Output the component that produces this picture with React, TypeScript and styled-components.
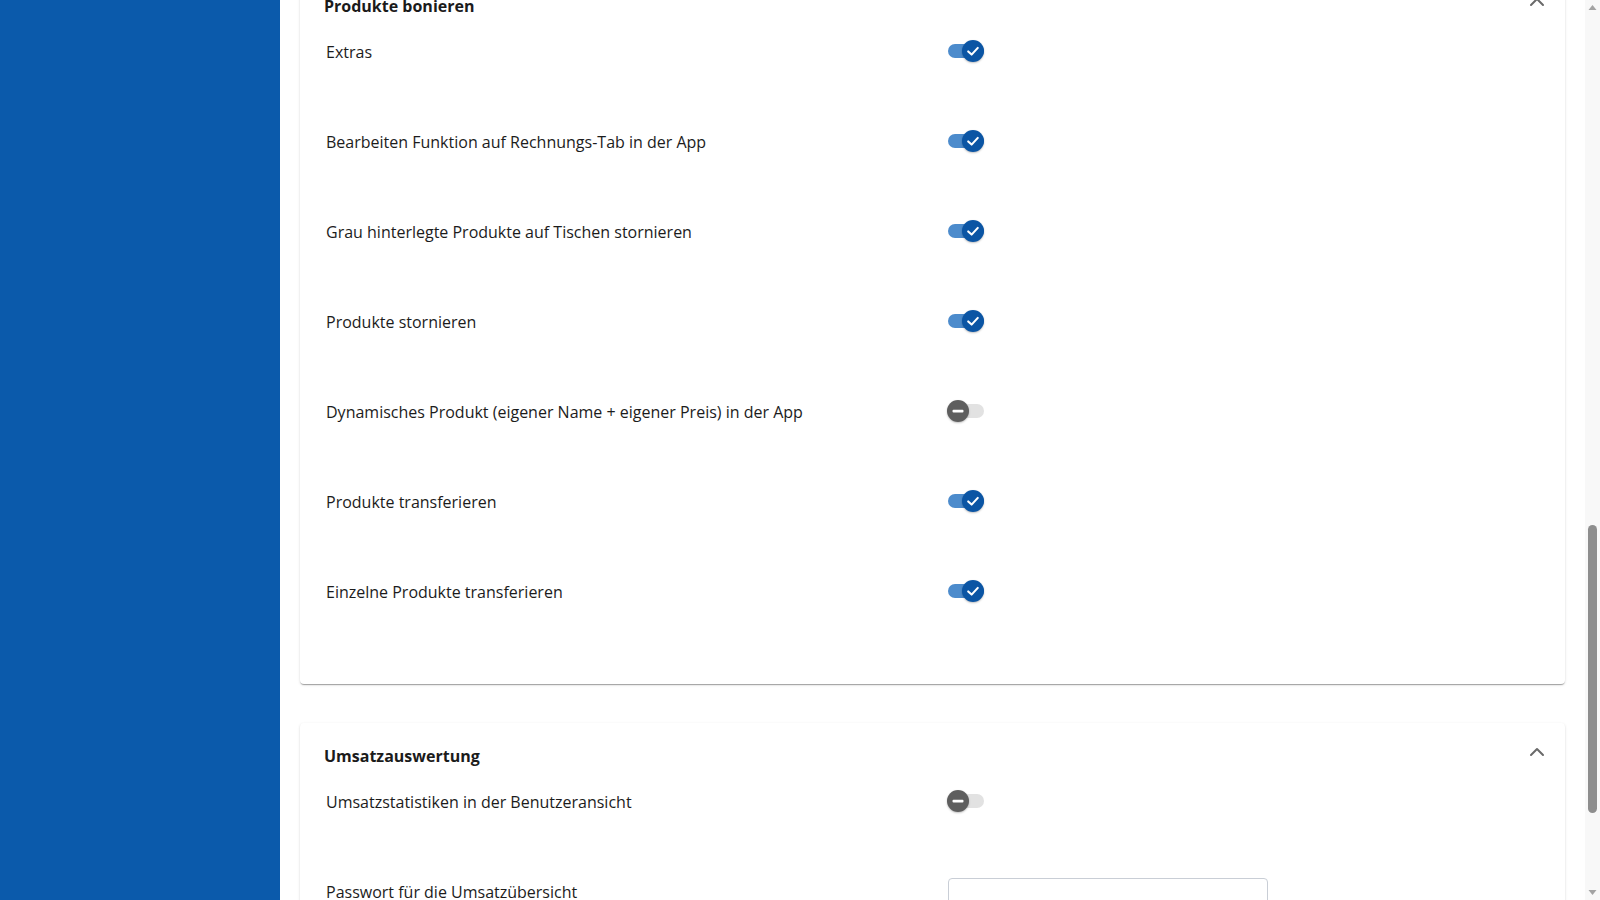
import React, { useLayoutEffect, useRef, useState } from 'react';
import styled, { createGlobalStyle } from 'styled-components';
import { ChevronUp } from 'lucide-react';

type Setting = {
  label: string;
  kind: 'toggle' | 'password';
  on?: boolean;
};

type Section = {
  id: string;
  title: string;
  settings: Setting[];
};

const SECTIONS: Section[] = [
  {
    id: 'allgemein',
    title: 'Allgemein',
    settings: [
      { label: 'Trinkgeld erlauben', kind: 'toggle', on: true },
      { label: 'Bon automatisch drucken', kind: 'toggle', on: true },
      { label: 'Kassenlade automatisch öffnen', kind: 'toggle', on: false },
      { label: 'Bewirtungsbeleg anbieten', kind: 'toggle', on: true },
      { label: 'Gutscheine akzeptieren', kind: 'toggle', on: false },
      { label: 'Rabatte erlauben', kind: 'toggle', on: true },
    ],
  },
  {
    id: 'tische',
    title: 'Tische',
    settings: [
      { label: 'Tischplan anzeigen', kind: 'toggle', on: true },
      { label: 'Tische zusammenlegen', kind: 'toggle', on: true },
      { label: 'Tische teilen', kind: 'toggle', on: false },
      { label: 'Gästeanzahl abfragen', kind: 'toggle', on: false },
      { label: 'Offene Tische hervorheben', kind: 'toggle', on: true },
    ],
  },
  {
    id: 'zahlung',
    title: 'Zahlung',
    settings: [
      { label: 'Kartenzahlung', kind: 'toggle', on: true },
      { label: 'Rechnung splitten', kind: 'toggle', on: true },
    ],
  },
  {
    id: 'bonieren',
    title: 'Produkte bonieren',
    settings: [
      { label: 'Extras', kind: 'toggle', on: true },
      { label: 'Bearbeiten Funktion auf Rechnungs-Tab in der App', kind: 'toggle', on: true },
      { label: 'Grau hinterlegte Produkte auf Tischen stornieren', kind: 'toggle', on: true },
      { label: 'Produkte stornieren', kind: 'toggle', on: true },
      { label: 'Dynamisches Produkt (eigener Name + eigener Preis) in der App', kind: 'toggle', on: false },
      { label: 'Produkte transferieren', kind: 'toggle', on: true },
      { label: 'Einzelne Produkte transferieren', kind: 'toggle', on: true },
    ],
  },
  {
    id: 'umsatz',
    title: 'Umsatzauswertung',
    settings: [
      { label: 'Umsatzstatistiken in der Benutzeransicht', kind: 'toggle', on: false },
      { label: 'Passwort für die Umsatzübersicht', kind: 'password' },
    ],
  },
];

const ARROW_SIZE = 15;

const GlobalStyle = createGlobalStyle`
  html, body {
    margin: 0;
    padding: 0;
    height: 100%;
    overflow: hidden;
  }
  body {
    font-family: "Open Sans", "Noto Sans", "Liberation Sans", sans-serif;
    color: #1c1c1c;
    background: #ffffff;
  }
  * {
    box-sizing: border-box;
  }
`;

function Switch({ initial }: { initial: boolean }) {
  const [checked, setChecked] = useState(initial);
  return (
    <SwitchRoot
      type="button"
      role="switch"
      aria-checked={checked}
      onClick={() => setChecked(c => !c)}
    >
      <Track $checked={checked} />
      <Thumb $checked={checked}>
        {checked ? (
          <svg width="22" height="22" viewBox="0 0 22 22">
            <path
              d="M6.2 11.4 L9.6 14.6 L15.8 7.9"
              fill="none"
              stroke="#ffffff"
              strokeWidth="2.1"
              strokeLinecap="round"
              strokeLinejoin="round"
            />
          </svg>
        ) : (
          <svg width="22" height="22" viewBox="0 0 22 22">
            <rect x="5.5" y="9.8" width="11" height="2.6" rx="1" fill="#ffffff" />
          </svg>
        )}
      </Thumb>
    </SwitchRoot>
  );
}

function SettingsCard({ section, cardRef }: { section: Section; cardRef?: React.Ref<HTMLDivElement> }) {
  return (
    <Card ref={cardRef}>
      <CardHeader>
        <CardTitle>{section.title}</CardTitle>
        <CollapseButton type="button" aria-label="Einklappen">
          <ChevronUp size={24} strokeWidth={2} color="#6a6a6a" />
        </CollapseButton>
      </CardHeader>
      {section.settings.map(s => (
        <Row key={s.label}>
          <Label>{s.label}</Label>
          <Control>
            {s.kind === 'toggle' ? <Switch initial={!!s.on} /> : <PasswordInput type="password" />}
          </Control>
        </Row>
      ))}
    </Card>
  );
}

type ThumbBox = { top: number; height: number };

export default function App() {
  const mainRef = useRef<HTMLDivElement>(null);
  const anchorRef = useRef<HTMLDivElement>(null);
  const [thumb, setThumb] = useState<ThumbBox>({ top: ARROW_SIZE, height: 0 });

  const syncThumb = () => {
    const main = mainRef.current;
    if (!main) return;
    const rail = main.clientHeight - ARROW_SIZE * 2;
    setThumb({
      top: ARROW_SIZE + (main.scrollTop / main.scrollHeight) * rail,
      height: (main.clientHeight / main.scrollHeight) * rail,
    });
  };

  // open the page at the "Produkte bonieren" block
  useLayoutEffect(() => {
    const main = mainRef.current;
    const anchor = anchorRef.current;
    if (!main || !anchor) return;
    const offset = anchor.getBoundingClientRect().top - main.getBoundingClientRect().top + main.scrollTop;
    main.scrollTop = offset + 27;
    syncThumb();
  }, []);

  return (
    <>
      <GlobalStyle />
      <Layout>
        <Sidebar />
        <Main ref={mainRef} onScroll={syncThumb}>
          {SECTIONS.map(section => (
            <SettingsCard
              key={section.id}
              section={section}
              cardRef={section.id === 'bonieren' ? anchorRef : undefined}
            />
          ))}
        </Main>
        <ScrollRail>
          <RailArrow>
            <svg width="15" height="15" viewBox="0 0 15 15">
              <path d="M3.5 10 L7.5 5 L11.5 10 Z" fill="#a3a3a3" />
            </svg>
          </RailArrow>
          <RailThumb style={{ top: thumb.top, height: thumb.height }} />
          <RailArrow>
            <svg width="15" height="15" viewBox="0 0 15 15">
              <path d="M3.5 5 L7.5 10 L11.5 5 Z" fill="#a3a3a3" />
            </svg>
          </RailArrow>
        </ScrollRail>
      </Layout>
    </>
  );
}

const Layout = styled.div`
  display: grid;
  grid-template-columns: 280px 1fr 15px;
  height: 100vh;
  width: 100vw;
`;

const Sidebar = styled.aside`
  background: #0b5aab;
  height: 100%;
`;

const Main = styled.main`
  height: 100%;
  overflow-y: scroll;
  scrollbar-width: none;
  padding: 38px 20px 140px;
  display: flex;
  flex-direction: column;
  gap: 39px;
  background: #ffffff;

  &::-webkit-scrollbar {
    display: none;
  }
`;

const ScrollRail = styled.div`
  position: relative;
  height: 100%;
  background: #f8f8f8;
  display: flex;
  flex-direction: column;
  justify-content: space-between;
`;

const RailArrow = styled.div`
  width: 15px;
  height: 15px;
  display: flex;
`;

const RailThumb = styled.div`
  position: absolute;
  left: 3px;
  width: 9px;
  border-radius: 5px;
  background: #8e8e8e;
`;

const Card = styled.div`
  background: #ffffff;
  border-radius: 4px;
  padding: 21px 24px 14px;
  box-shadow: 0 2px 1px -1px rgba(0, 0, 0, 0.2), 0 1px 1px 0 rgba(0, 0, 0, 0.14),
    0 1px 3px 0 rgba(0, 0, 0, 0.12);
`;

const CardHeader = styled.div`
  display: flex;
  align-items: center;
  justify-content: space-between;
  height: 24px;
  margin-bottom: 22px;
`;

const CardTitle = styled.h3`
  margin: 0;
  font-size: 16px;
  line-height: 24px;
  font-weight: 700;
  color: #1b1b1b;
`;

const CollapseButton = styled.button`
  border: none;
  background: transparent;
  padding: 0;
  margin: -8px -8px 0 0;
  display: flex;
  cursor: pointer;
`;

const Row = styled.div`
  display: grid;
  grid-template-columns: minmax(0, 1fr) minmax(0, 1fr);
  column-gap: 30px;
  align-items: start;
  min-height: 90px;
`;

const Label = styled.div`
  font-size: 16px;
  line-height: 24px;
  padding-left: 2px;
  color: #1c1c1c;
`;

const Control = styled.div`
  display: flex;
  align-items: flex-start;
`;

const SwitchRoot = styled.button`
  position: relative;
  width: 38px;
  height: 24px;
  margin-top: -1px;
  padding: 0;
  border: none;
  background: transparent;
  cursor: pointer;
`;

const Track = styled.span<{ $checked: boolean }>`
  position: absolute;
  left: 0;
  top: 5px;
  width: 36px;
  height: 14px;
  border-radius: 7px;
  background: ${p => (p.$checked ? '#4c8bcc' : '#e2e2e2')};
`;

const Thumb = styled.span<{ $checked: boolean }>`
  position: absolute;
  top: 1px;
  left: ${p => (p.$checked ? '14px' : '-1px')};
  width: 22px;
  height: 22px;
  border-radius: 50%;
  display: flex;
  background: ${p => (p.$checked ? '#0b55a4' : '#5e5e5e')};
  box-shadow: 0 1px 2px rgba(0, 0, 0, 0.25);
  transition: left 0.15s ease;
`;

const PasswordInput = styled.input`
  width: 320px;
  height: 40px;
  margin-top: -2px;
  border: 1px solid #c9ced6;
  border-radius: 4px;
  padding: 8px 12px;
  font-size: 16px;
  font-family: inherit;
  outline: none;
`;
